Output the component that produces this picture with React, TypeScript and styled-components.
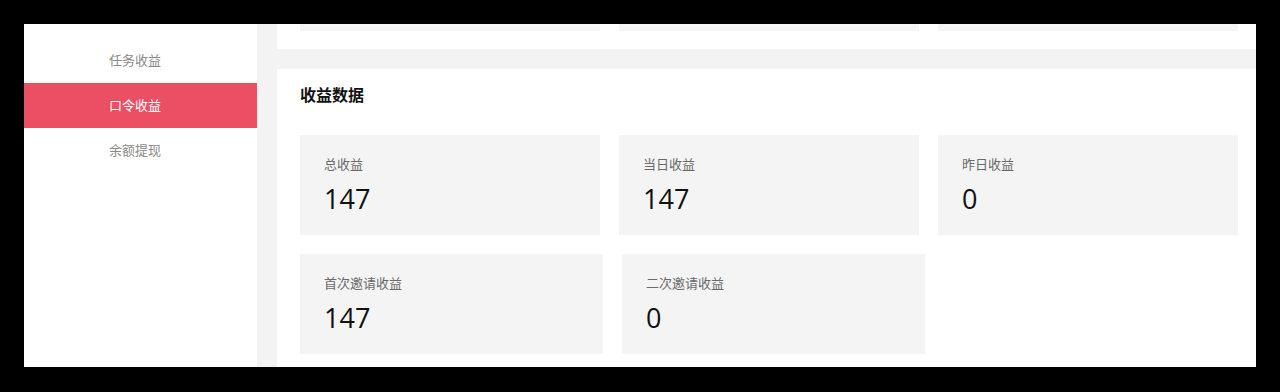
import React from "react";
import styled, { createGlobalStyle } from "styled-components";

const Global = createGlobalStyle`
  html, body { margin: 0; padding: 0; background: #000; }
  body { font-family: "Noto Sans CJK SC", "Noto Sans", sans-serif; }
  * { box-sizing: border-box; }
`;

const Frame = styled.div`
  width: 1280px;
  height: 392px;
  background: #000;
  padding: 24px 24px 25px 24px;
`;

const Screen = styled.div`
  display: flex;
  height: 100%;
  background: #f3f3f3;
  overflow: hidden;
`;

const Sidebar = styled.nav`
  width: 233px;
  flex: none;
  background: #fff;
  padding-top: 14px;
  display: flex;
  flex-direction: column;
`;

const NavItem = styled.div<{ $active?: boolean }>`
  height: 45px;
  display: flex;
  align-items: center;
  padding-left: 85px;
  padding-bottom: 2px;
  font-size: 13px;
  color: ${(p) => (p.$active ? "#fff" : "#8a8a8a")};
  background: ${(p) => (p.$active ? "#eb4f64" : "transparent")};
`;

const Main = styled.main`
  flex: 1;
  padding-left: 20px;
  display: flex;
  flex-direction: column;
  gap: 20px;
  min-width: 0;
`;

const Panel = styled.section<{ $grow?: boolean }>`
  background: #fff;
  padding: 0 18px 0 23px;
  ${(p) => (p.$grow ? "flex: 1;" : "")}
`;

const ClippedPanel = styled(Panel)`
  padding-bottom: 18px;
`;

const Title = styled.h2`
  margin: 0;
  padding-top: 14px;
  font-size: 16px;
  line-height: 22px;
  font-weight: 700;
  color: #111;
`;

const Row = styled.div<{ $top?: number }>`
  display: flex;
  gap: 19px;
  margin-top: ${(p) => p.$top ?? 0}px;
`;

const Card = styled.div<{ $w: number }>`
  width: ${(p) => p.$w}px;
  height: 100px;
  flex: none;
  background: #f4f4f4;
  padding: 20px 24px 0;
  overflow: hidden;
`;

const CutCard = styled.div`
  width: 300px;
  height: 7px;
  flex: none;
  background: #f4f4f4;
`;

const Label = styled.div`
  font-size: 13px;
  line-height: 18px;
  color: #6a6a6a;
`;

const Value = styled.div`
  margin-top: 7px;
  font-family: "Open Sans", "Noto Sans CJK SC", sans-serif;
  font-size: 27px;
  line-height: 38px;
  color: #111;
`;

const Stat = ({ w, label, value }: { w: number; label: string; value: string }) => (
  <Card $w={w}>
    <Label>{label}</Label>
    <Value>{value}</Value>
  </Card>
);

export default function App() {
  return (
    <>
      <Global />
      <Frame>
        <Screen>
          <Sidebar>
            <NavItem>任务收益</NavItem>
            <NavItem $active>口令收益</NavItem>
            <NavItem>余额提现</NavItem>
          </Sidebar>
          <Main>
            <ClippedPanel>
              <Row>
                <CutCard />
                <CutCard />
                <CutCard />
              </Row>
            </ClippedPanel>
            <Panel $grow>
              <Title>收益数据</Title>
              <Row $top={30}>
                <Stat w={300} label="总收益" value="147" />
                <Stat w={300} label="当日收益" value="147" />
                <Stat w={300} label="昨日收益" value="0" />
              </Row>
              <Row $top={19}>
                <Stat w={303} label="首次邀请收益" value="147" />
                <Stat w={303} label="二次邀请收益" value="0" />
              </Row>
            </Panel>
          </Main>
        </Screen>
      </Frame>
    </>
  );
}
